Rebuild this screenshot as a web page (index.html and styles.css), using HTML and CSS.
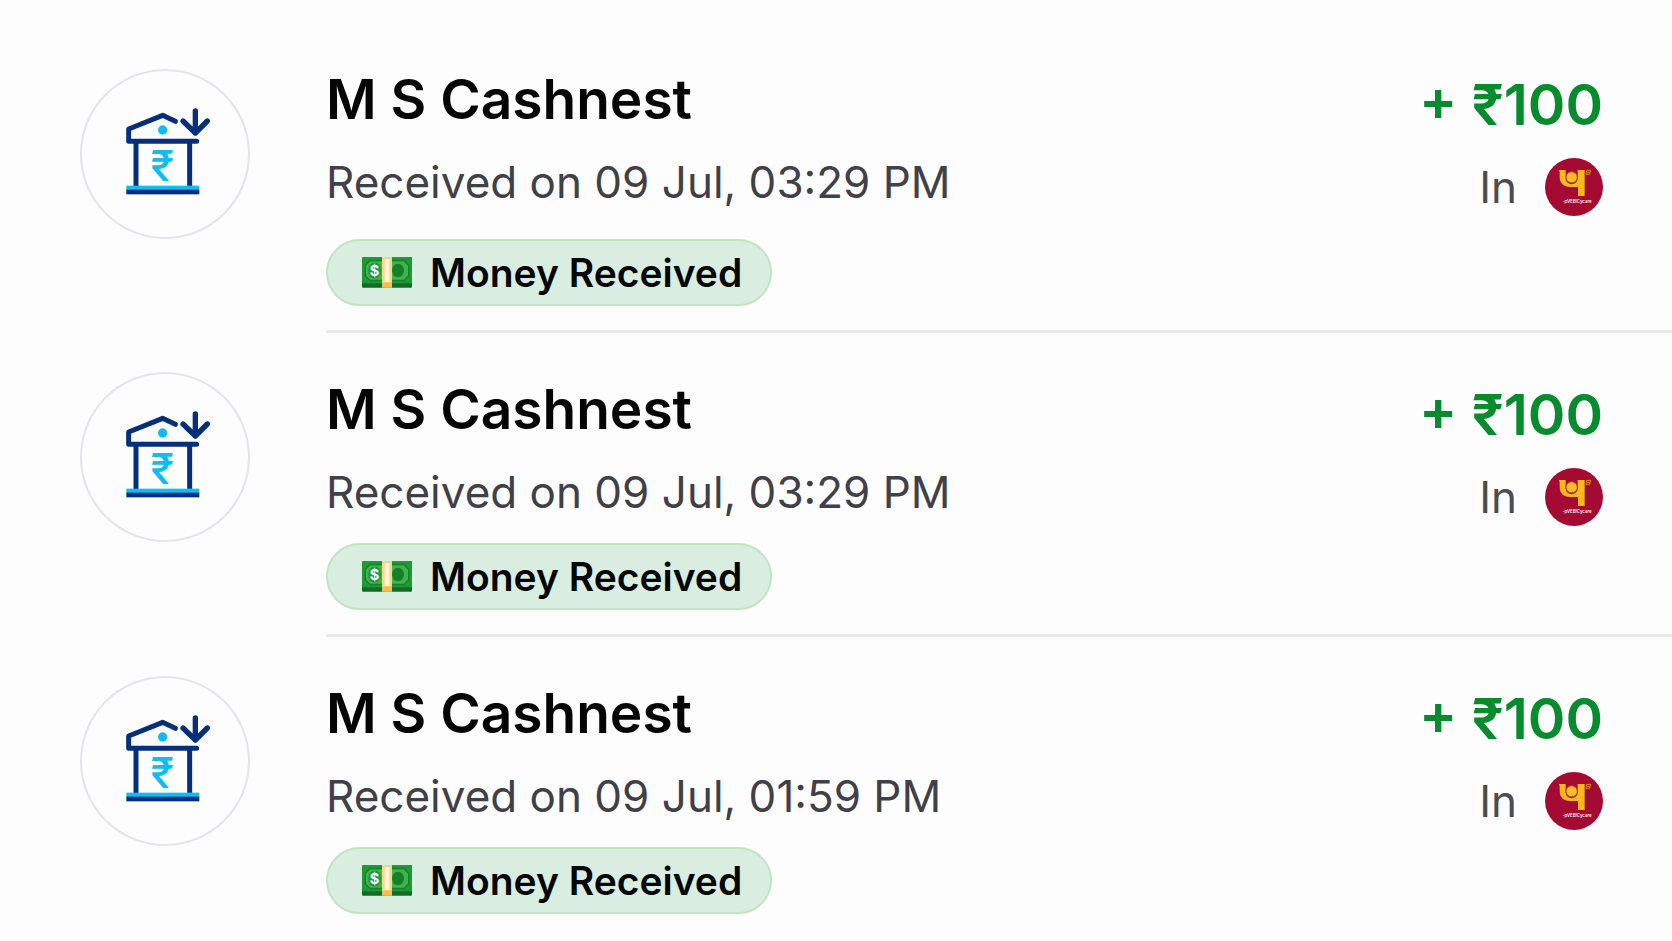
FILE: index.html
```html
<!DOCTYPE html>
<html lang="en">
<head>
  <meta charset="UTF-8">
  <meta name="viewport" content="width=device-width, initial-scale=1.0">
  <title>Payment History</title>
  <link rel="stylesheet" href="styles.css">
</head>
<body>
  <!-- Shared icons -->
  <svg class="sprite" aria-hidden="true">
    <symbol id="bank" viewBox="0 0 510 510">
      <g fill="none" stroke="#052f7c" stroke-width="15" stroke-linejoin="round" stroke-linecap="round">
        <path d="M350 217H146V180L248 139L286 157"/>
        <path d="M346 126V192M309 156L346 192L382 156" stroke-width="16"/>
        <path d="M168 217V352M329 217V352" stroke-linecap="butt"/>
      </g>
      <path d="M324 172L346 200L368 172L346 184Z" fill="#052f7c"/>
      <circle cx="248" cy="183" r="14" fill="#10bdf2"/>
      <rect x="139" y="350" width="219" height="13" fill="#10bdf2"/>
      <rect x="139" y="362" width="219" height="14" fill="#052f7c"/>
      <text class="bank-rupee" x="247" y="336" text-anchor="middle">₹</text>
    </symbol>
    <symbol id="cash" viewBox="0 0 150 92">
      <rect width="150" height="92" rx="3" fill="#146c24"/>
      <rect width="150" height="78" rx="3" fill="#1c9a35"/>
      <path d="M24 10H126L140 24V56L126 70H24L10 56V24Z" fill="#42b24a" stroke="#168029" stroke-width="4"/>
      <ellipse cx="38" cy="40" rx="20" ry="24" fill="#26963a"/>
      <ellipse cx="108" cy="40" rx="18" ry="20" fill="#15802b"/>
      <text class="cash-dollar" x="38" y="56" text-anchor="middle">$</text>
      <rect x="60" width="30" height="92" fill="#f5c04b"/>
      <rect x="60" width="30" height="76" fill="#fbd983"/>
      <rect x="68" y="6" width="14" height="68" fill="#fff6dc"/>
    </symbol>
    <symbol id="pnb" viewBox="0 0 174 174">
      <circle cx="87" cy="87" r="87" fill="#a50a32"/>
      <path d="M42 36H62V61A18 18 0 0 0 98 61V36H119V114H99V87H76C55 87 44 75 44 57V43Z" fill="#fbb81c"/>
      <circle cx="80" cy="58" r="17" fill="#fdbd20" stroke="#a5401f" stroke-width="3"/>
      <path d="M125 37H137L134 49H123Z" fill="none" stroke="#e08a28" stroke-width="3"/>
      <path d="M126 43H135" stroke="#e08a28" stroke-width="3"/>
      <text class="pnb-name" x="97" y="135" text-anchor="middle">·pVEBICycare</text>
    </symbol>
  </svg>

  <main class="history">
    <article class="row row-first">
      <div class="avatar"><svg><use href="#bank"/></svg></div>
      <div class="details">
        <div class="info">
          <h2 class="name">M S Cashnest</h2>
          <p class="date">Received on 09 Jul, 03:29 PM</p>
          <span class="tag"><svg><use href="#cash"/></svg>Money Received</span>
        </div>
        <div class="payment">
          <p class="amount">+ ₹100</p>
          <p class="account">In <svg role="img" aria-label="PNB"><use href="#pnb"/></svg></p>
        </div>
      </div>
    </article>

    <article class="row">
      <div class="avatar"><svg><use href="#bank"/></svg></div>
      <div class="details">
        <div class="info">
          <h2 class="name">M S Cashnest</h2>
          <p class="date">Received on 09 Jul, 03:29 PM</p>
          <span class="tag"><svg><use href="#cash"/></svg>Money Received</span>
        </div>
        <div class="payment">
          <p class="amount">+ ₹100</p>
          <p class="account">In <svg role="img" aria-label="PNB"><use href="#pnb"/></svg></p>
        </div>
      </div>
    </article>

    <article class="row">
      <div class="avatar"><svg><use href="#bank"/></svg></div>
      <div class="details">
        <div class="info">
          <h2 class="name">M S Cashnest</h2>
          <p class="date">Received on 09 Jul, 01:59 PM</p>
          <span class="tag"><svg><use href="#cash"/></svg>Money Received</span>
        </div>
        <div class="payment">
          <p class="amount">+ ₹100</p>
          <p class="account">In <svg role="img" aria-label="PNB"><use href="#pnb"/></svg></p>
        </div>
      </div>
    </article>
  </main>
</body>
</html>
```
FILE: styles.css
```css
* {
  margin: 0;
  padding: 0;
  box-sizing: border-box;
}

body {
  font-family: 'Inter', sans-serif;
  background-color: #fdfdfd;
  color: #050505;
}

.sprite {
  display: none;
}

.row {
  display: flex;
  gap: 76px;
  padding-left: 80px;
}

.avatar {
  flex: none;
  padding-top: 39px;
}

.avatar svg {
  display: block;
  width: 170px;
  height: 170px;
  border-radius: 50%;
  box-shadow: inset 0 0 0 2px #e3e3ea;
}

/* the divider starts at the text, not under the icon */
.details {
  flex: 1;
  display: flex;
  justify-content: space-between;
  padding: 44px 69px 24px 0;
  border-bottom: 3px solid #e8e8ea;
}

.row:last-child .details {
  border-bottom: none;
}

.name {
  font-size: 55px;
  font-weight: 600;
  line-height: 64px;
}

.date {
  margin-top: 27px;
  font-size: 44px;
  line-height: 48px;
  color: #3f4048;
}

.tag {
  display: inline-flex;
  align-items: center;
  gap: 18px;
  height: 67px;
  margin-top: 27px;
  padding: 0 28px 0 34px;
  border: 2px solid #bfe6bd;
  border-radius: 34px;
  background: #d9eee0;
  font-size: 39px;
  font-weight: 600;
}

.tag svg {
  width: 50px;
  height: 31px;
}

.payment {
  padding-top: 6px;
  text-align: right;
}

.amount {
  font-size: 57px;
  font-weight: 600;
  line-height: 64px;
  color: #078c2d;
}

.account {
  display: flex;
  align-items: center;
  justify-content: flex-end;
  gap: 28px;
  height: 48px;
  margin-top: 26px;
  font-size: 44px;
  color: #4b4c52;
}

.account svg {
  width: 58px;
  height: 58px;
}

/* first row has more room above it */
.row-first .avatar {
  padding-top: 69px;
}

.row-first .details {
  padding-top: 67px;
}

.row-first .tag {
  margin-top: 33px;
}

.bank-rupee {
  font-size: 128px;
  font-weight: 500;
  fill: #10bdf2;
}

.cash-dollar {
  font-size: 44px;
  font-weight: 700;
  fill: #fff;
}

.pnb-name {
  font-size: 13px;
  font-weight: 600;
  fill: #fbe9ee;
}
```
